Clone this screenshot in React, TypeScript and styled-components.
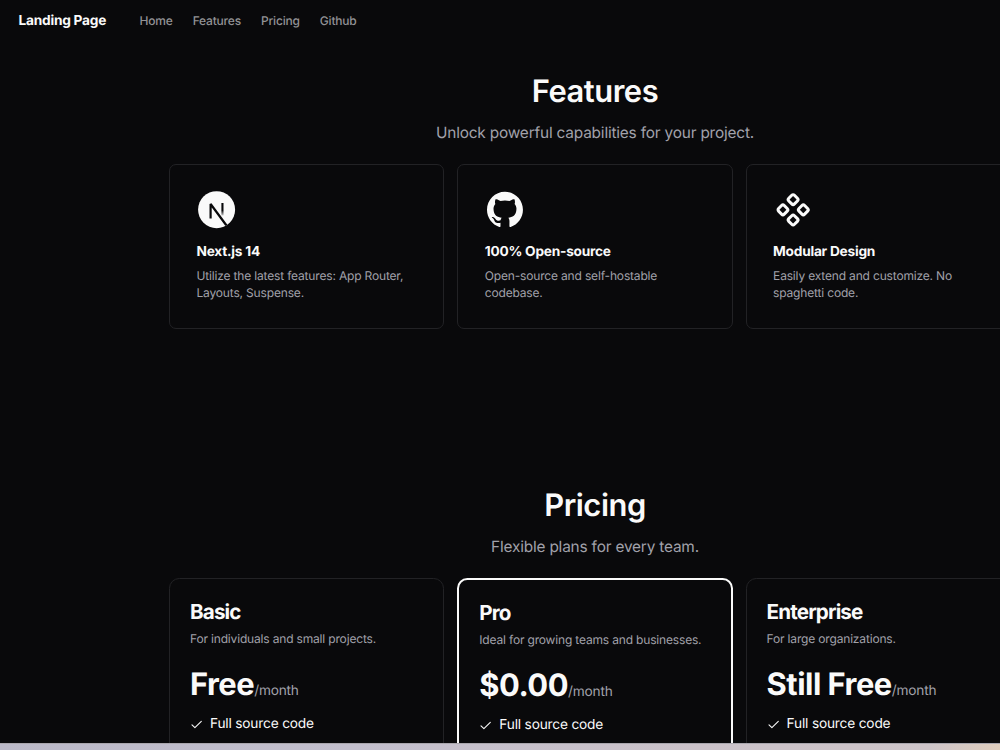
import React from 'react';
import styled, { createGlobalStyle } from 'styled-components';

const GlobalStyle = createGlobalStyle`
  * {
    box-sizing: border-box;
  }

  body {
    margin: 0;
    background: #09090b;
    color: #fafafa;
    font-family: Inter, 'Liberation Sans', sans-serif;
    text-rendering: geometricPrecision;
    overflow: hidden;
  }
`;

const Screen = styled.div`
  height: 750px;
  display: flex;
  flex-direction: column;
  overflow: hidden;
`;

const Page = styled.div`
  flex: 1;
  min-height: 0;
  overflow: hidden;
`;

const DesktopEdge = styled.div`
  flex: none;
  height: 7px;
  border-top: 1px solid #a9a6ad;
  background: linear-gradient(90deg, #bbb9c8 0%, #c3bfcd 35%, #cbc2c9 70%, #cec5c9 93%, #dfcdbd 100%);
`;

const NavBar = styled.nav`
  height: 40px;
  padding: 1px 18.5px 0;
  display: flex;
  align-items: center;
`;

const Brand = styled.span`
  width: 121px;
  font-size: 13.7px;
  font-weight: 700;
  line-height: 20px;
  letter-spacing: -0.23px;
`;

const NavLinks = styled.div`
  display: flex;
  gap: 20px;
`;

const NavLink = styled.a`
  font-size: 12px;
  font-weight: 500;
  line-height: 20px;
  letter-spacing: -0.19px;
  color: #929295;
`;

const Section = styled.section<{ $height: number }>`
  width: 852px;
  height: ${({ $height }) => $height}px;
  margin-left: 169px;
`;

const SectionHeader = styled.header`
  height: 124px;
  padding-top: 32px;
  text-align: center;
`;

const SectionTitle = styled.h2`
  margin: 0;
  font-size: 30.9px;
  font-weight: 600;
  line-height: 40px;
  letter-spacing: -0.47px;
`;

const SectionSubtitle = styled.p`
  margin: 10px 0 0;
  font-size: 15.4px;
  line-height: 22px;
  letter-spacing: -0.19px;
  color: #a1a1aa;
`;

const Grid = styled.div`
  display: grid;
  grid-template-columns: repeat(3, 275.3px);
  gap: 13px;
`;

const FeatureCard = styled.article`
  height: 165px;
  padding: 25px 26.5px;
  border: 1px solid #222225;
  border-radius: 7px;

  svg {
    display: block;
    width: 41px;
    height: 41px;
  }
`;

const FeatureTitle = styled.h3`
  margin: 11px 0 0;
  font-size: 13.7px;
  font-weight: 700;
  line-height: 20px;
  letter-spacing: -0.24px;
`;

const FeatureText = styled.p`
  margin: 5px 0 0;
  font-size: 12px;
  line-height: 17px;
  letter-spacing: -0.17px;
  color: #a1a1aa;
`;

const PlanCard = styled.article<{ $popular?: boolean }>`
  height: 320px;
  padding: 20px;
  border: ${({ $popular }) => ($popular ? '2px solid #fafafa' : '1px solid #222225')};
  border-radius: 10.3px;
`;

const PlanName = styled.h3`
  margin: 0;
  font-size: 20.6px;
  font-weight: 700;
  line-height: 26px;
  letter-spacing: -0.85px;
`;

const PlanText = styled.p`
  margin: 5px 0 0;
  font-size: 12px;
  line-height: 17px;
  letter-spacing: -0.17px;
  color: #a1a1aa;
`;

const Price = styled.div`
  margin-top: 19px;
  font-size: 30.9px;
  font-weight: 700;
  line-height: 37px;
  letter-spacing: -0.5px;
`;

const Period = styled.span`
  font-size: 13.7px;
  font-weight: 400;
  letter-spacing: -0.2px;
  color: #a1a1aa;
`;

const PlanItem = styled.div`
  margin-top: 4px;
  display: flex;
  align-items: center;
  gap: 7px;
  font-size: 13.7px;
  line-height: 20px;
  letter-spacing: -0.18px;

  svg {
    width: 13px;
    height: 13px;
  }
`;

const NextIcon = () => (
  <svg viewBox="0.4 0 41 41" fill="none">
    <defs>
      <clipPath id="next-disc">
        <circle cx="20" cy="19.7" r="18.5" />
      </clipPath>
      <linearGradient id="next-stem" x1="0" y1="13" x2="0" y2="25.5" gradientUnits="userSpaceOnUse">
        <stop offset="0.6" stopColor="#09090b" />
        <stop offset="1" stopColor="#09090b" stopOpacity="0.2" />
      </linearGradient>
    </defs>
    <circle cx="20" cy="19.7" r="18.5" fill="#fafafa" />
    <g clipPath="url(#next-disc)">
      <path d="M14 28.5V14L31 37" stroke="#09090b" strokeWidth="2.2" strokeLinejoin="bevel" />
      <rect x="24.8" y="13" width="2.1" height="12.5" fill="url(#next-stem)" />
    </g>
  </svg>
);

const GithubIcon = () => (
  <svg viewBox="-5.4 -4.6 111.3 111.3" fill="#fafafa">
    <path
      fillRule="evenodd"
      clipRule="evenodd"
      d="M48.854 0C21.839 0 0 22 0 49.217c0 21.756 13.993 40.172 33.405 46.69 2.427.49 3.316-1.059 3.316-2.362 0-1.141-.08-5.052-.08-9.127-13.59 2.934-16.42-5.867-16.42-5.867-2.184-5.704-5.42-7.17-5.42-7.17-4.448-3.015.324-3.015.324-3.015 4.934.326 7.523 5.052 7.523 5.052 4.367 7.496 11.404 5.378 14.235 4.074.404-3.178 1.699-5.378 3.074-6.6-10.839-1.141-22.243-5.378-22.243-24.283 0-5.378 1.94-9.778 5.014-13.2-.485-1.222-2.184-6.275.486-13.038 0 0 4.125-1.304 13.426 5.052a46.97 46.97 0 0 1 12.214-1.63c4.125 0 8.33.571 12.213 1.63 9.302-6.356 13.427-5.052 13.427-5.052 2.67 6.763.97 11.816.485 13.038 3.155 3.422 5.015 7.822 5.015 13.2 0 18.905-11.404 23.06-22.324 24.283 1.78 1.548 3.316 4.481 3.316 9.126 0 6.6-.08 11.897-.08 13.526 0 1.304.89 2.853 3.316 2.364 19.412-6.52 33.405-24.935 33.405-46.691C97.707 22 75.788 0 48.854 0z"
    />
  </svg>
);

const ModulesIcon = () => (
  <svg viewBox="0 0 41 41" fill="none" stroke="#fafafa" strokeWidth="3">
    <rect x="16.1" y="5.6" width="8" height="8" rx="1.9" transform="rotate(45 20.1 9.6)" />
    <rect x="5.9" y="15.8" width="8" height="8" rx="1.9" transform="rotate(45 9.9 19.8)" />
    <rect x="26.3" y="15.8" width="8" height="8" rx="1.9" transform="rotate(45 30.3 19.8)" />
    <rect x="16.1" y="26" width="8" height="8" rx="1.9" transform="rotate(45 20.1 30)" />
  </svg>
);

const CheckIcon = () => (
  <svg viewBox="0 0 13 13" fill="none" stroke="#fafafa" strokeWidth="1.1">
    <path d="M2 6.8L4.9 9.6L11.3 3.3" strokeLinecap="round" strokeLinejoin="round" />
  </svg>
);

const links = ['Home', 'Features', 'Pricing', 'Github'];

const features = [
  { icon: <NextIcon />, title: 'Next.js 14', text: 'Utilize the latest features: App Router, Layouts, Suspense.' },
  { icon: <GithubIcon />, title: '100% Open-source', text: 'Open-source and self-hostable codebase.' },
  { icon: <ModulesIcon />, title: 'Modular Design', text: 'Easily extend and customize. No spaghetti code.' },
];

const plans = [
  { name: 'Basic', text: 'For individuals and small projects.', price: 'Free' },
  { name: 'Pro', text: 'Ideal for growing teams and businesses.', price: '$0.00', popular: true },
  { name: 'Enterprise', text: 'For large organizations.', price: 'Still Free' },
];

const App = () => (
  <Screen>
    <GlobalStyle />
    <Page>
      <NavBar>
        <Brand>Landing Page</Brand>
        <NavLinks>
          {links.map((link) => (
            <NavLink key={link}>{link}</NavLink>
          ))}
        </NavLinks>
      </NavBar>
      <Section $height={414}>
        <SectionHeader>
          <SectionTitle>Features</SectionTitle>
          <SectionSubtitle>Unlock powerful capabilities for your project.</SectionSubtitle>
        </SectionHeader>
        <Grid>
          {features.map(({ icon, title, text }) => (
            <FeatureCard key={title}>
              {icon}
              <FeatureTitle>{title}</FeatureTitle>
              <FeatureText>{text}</FeatureText>
            </FeatureCard>
          ))}
        </Grid>
      </Section>
      <Section $height={460}>
        <SectionHeader>
          <SectionTitle>Pricing</SectionTitle>
          <SectionSubtitle>Flexible plans for every team.</SectionSubtitle>
        </SectionHeader>
        <Grid>
          {plans.map(({ name, text, price, popular }) => (
            <PlanCard key={name} $popular={popular}>
              <PlanName>{name}</PlanName>
              <PlanText>{text}</PlanText>
              <Price>
                {price}
                <Period>/month</Period>
              </Price>
              <PlanItem>
                <CheckIcon />
                Full source code
              </PlanItem>
            </PlanCard>
          ))}
        </Grid>
      </Section>
    </Page>
    <DesktopEdge />
  </Screen>
);

export default App;
